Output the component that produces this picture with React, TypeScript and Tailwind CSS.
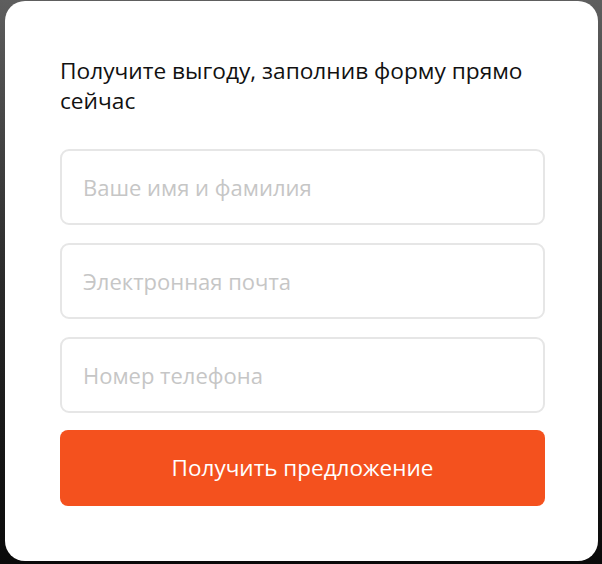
import React from 'react';

const fields = ['Ваше имя и фамилия', 'Электронная почта', 'Номер телефона'];

const App: React.FC = () => {
  return (
    <div className="w-[602px] h-[564px] overflow-hidden bg-gradient-to-b from-[#5e5e5e] via-[#2a2a2a] to-[#0a0a0a] font-['Open_Sans',sans-serif]">
      {/* Form card */}
      <div className="ml-[5px] mt-[1px] w-[593px] h-[560px] rounded-[20px] bg-white pl-[55px] pr-[53px] pt-[55px]">
        <h2 className="text-[22.7px] leading-[30px] font-normal text-[#111]">
          Получите выгоду, заполнив форму прямо сейчас
        </h2>

        <form className="mt-[33px] flex flex-col gap-[18px]" onSubmit={(e) => e.preventDefault()}>
          {fields.map((f) => (
            <input
              key={f}
              type="text"
              placeholder={f}
              className="h-[76px] w-full rounded-[9px] border-2 border-[#e6e6e6] bg-white px-[21px] text-[22px] text-[#333] placeholder-[#c6c6c6] outline-none"
            />
          ))}
          <button
            type="submit"
            className="-mt-px h-[76px] w-full rounded-[8px] bg-[#f4511e] text-[22.5px] text-white"
          >
            Получить предложение
          </button>
        </form>
      </div>
    </div>
  );
};

export default App;
